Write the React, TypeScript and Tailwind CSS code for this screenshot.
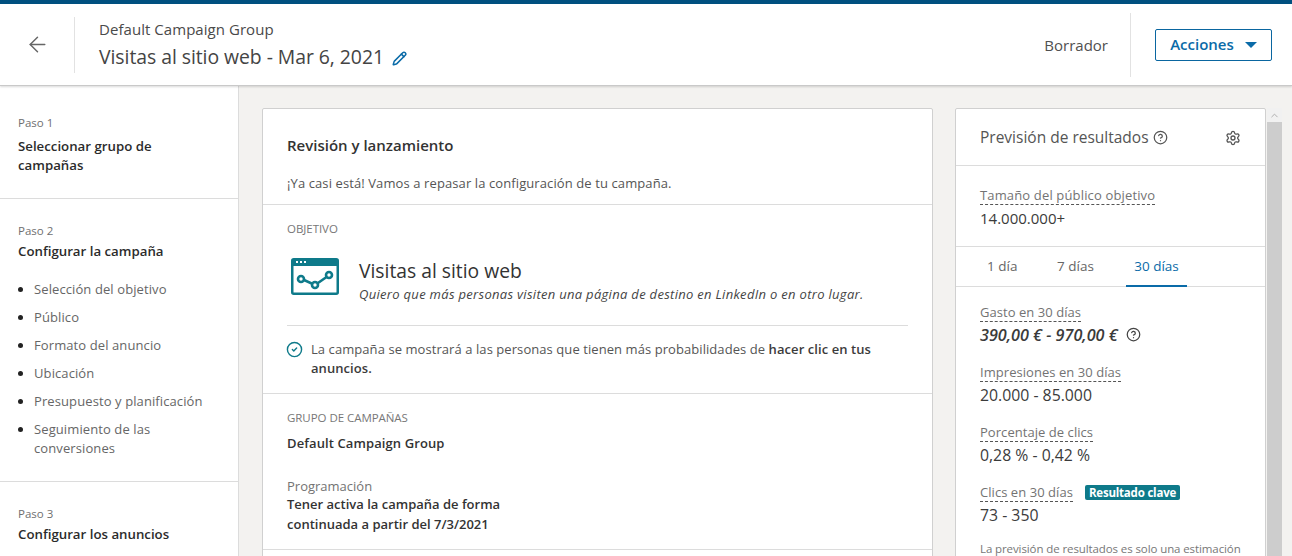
import React from 'react';
import { ArrowLeft, Settings, CircleHelp, CircleCheck, Pencil, ChevronUp } from 'lucide-react';

const font = "font-['Open_Sans',sans-serif]";

function Step({ label, title, wide }: { label: string; title: string; wide?: boolean }) {
  return (
    <>
      <div className="text-[11.5px] leading-[16px] text-[#6f6f6f]">{label}</div>
      <div className={`text-[13.25px] leading-[19px] font-semibold text-[#2b2b2b] ${wide ? 'mt-[3px]' : 'mt-[6px] w-[150px]'}`}>{title}</div>
    </>
  );
}

function Metric({ label, value, italic, children, badge }: { label: string; value: string; italic?: boolean; children?: React.ReactNode; badge?: boolean }) {
  return (
    <div className="mb-[17px]">
      <div className="flex items-center h-[19px]">
        <span className="text-[13px] leading-[18px] text-[#737373] border-b border-dashed border-[#555] tracking-[0.05px]">{label}</span>
        {badge && (
          <span className="ml-[12px] bg-[#0e7a8a] text-white text-[11.5px] font-bold leading-[15px] px-[4px] rounded-[2px] tracking-[-0.2px]">Resultado clave</span>
        )}
      </div>
      <div className={`flex items-center h-[24px] pt-[3px] text-[#3b3b3b] ${italic ? 'text-[16.2px] italic font-semibold' : 'text-[15.8px] font-medium'}`}>
        {value}
        {children}
      </div>
    </div>
  );
}

export default function App() {
  const items = ['Selección del objetivo', 'Público', 'Formato del anuncio', 'Ubicación', 'Presupuesto y planificación'];

  return (
    <div className={`${font} h-[556px] w-[1292px] overflow-hidden bg-[#f3f2f0] flex flex-col`}>
      {/* Header */}
      <header className="relative z-10 h-[86px] shrink-0 bg-white border-t-4 border-[#00507f] border-b border-b-[#c9c9c9] shadow-[0_1px_2px_rgba(0,0,0,0.15)] flex items-center">
        <div className="w-[75px] h-[56px] border-r border-[#e2e2e2] flex items-center pl-[25px]">
          <ArrowLeft size={25} strokeWidth={1.4} className="text-[#666] -mt-[1px]" />
        </div>
        <div className="pl-[24px]">
          <div className="text-[15px] leading-[20px] text-[#4a4a4a] tracking-[0.05px] -mt-[1px]">Default Campaign Group</div>
          <div className="flex items-center mt-[5px] text-[19.4px] leading-[26px] text-[#444] tracking-[-0.05px]">
            Visitas al sitio web - Mar 6, 2021
            <Pencil size={15} strokeWidth={2.4} className="text-[#0a6ba8] ml-[8px] mt-[3px]" />
          </div>
        </div>
        <div className="ml-auto flex items-center">
          <span className="text-[15px] text-[#505050] mr-[22px] mt-[2px]">Borrador</span>
          <div className="w-px h-[64px] bg-[#e2e2e2]" />
          <button className="ml-[24px] mr-[20px] w-[117px] h-[32px] border border-[#0a66a0] rounded-[2px] flex items-center justify-center text-[15px] font-semibold text-[#0a6ba8]">
            Acciones
            <span className="ml-[11px] w-0 h-0 border-l-[6px] border-r-[6px] border-t-[6px] border-l-transparent border-r-transparent border-t-[#0a6ba8]" />
          </button>
        </div>
      </header>

      <div className="flex flex-1 min-h-0">
        {/* Sidebar */}
        <aside className="w-[239px] shrink-0 bg-white border-r border-[#dcdcdc]">
          <div className="pl-[18px] pr-[20px] pt-[29px] h-[113px] border-b border-[#dcdcdc]">
            <Step label="Paso 1" title="Seleccionar grupo de campañas" />
          </div>
          <div className="pl-[18px] pr-[20px] pt-[24px] h-[283px] border-b border-[#dcdcdc]">
            <Step label="Paso 2" title="Configurar la campaña" wide />
            <ul className="mt-[19px] text-[13px] leading-[19px] text-[#666] tracking-[0.1px]">
              {items.map((item) => (
                <li key={item} className="flex items-start mb-[9px]">
                  <span className="w-[5px] h-[5px] mt-[7px] rounded-full bg-[#222] mr-[11px] shrink-0" />
                  {item}
                </li>
              ))}
              <li className="flex items-start">
                <span className="w-[5px] h-[5px] mt-[7px] rounded-full bg-[#222] mr-[11px] shrink-0" />
                <span>Seguimiento de las<br />conversiones</span>
              </li>
            </ul>
          </div>
          <div className="pl-[18px] pr-[20px] pt-[24px]">
            <Step label="Paso 3" title="Configurar los anuncios" wide />
          </div>
        </aside>

        {/* Main */}
        <main className="flex-1 flex items-start pl-[23px] pt-[22px] min-w-0">
          <section className="w-[671px] shrink-0 bg-white border border-[#d0d0d0] rounded-[2px]">
            <div className="h-[96px] px-[24px] pt-[25px] border-b border-[#dcdcdc]">
              <h2 className="text-[15px] leading-[22px] font-semibold text-[#333]">Revisión y lanzamiento</h2>
              <p className="mt-[18px] text-[13px] leading-[18px] text-[#555] tracking-[0.1px]">¡Ya casi está! Vamos a repasar la configuración de tu campaña.</p>
            </div>
            <div className="h-[189px] px-[24px] pt-[16px] border-b border-[#dcdcdc]">
              <div className="text-[11.5px] leading-[16px] text-[#777] tracking-[-0.05px]">OBJETIVO</div>
              <div className="flex items-start mt-[13px] h-[76px] border-b border-[#dcdcdc]">
                <svg width="48" height="37" viewBox="0 0 48 37" fill="none" className="shrink-0 ml-[4px] mt-[8px]">
                  <rect x="1.25" y="1.25" width="45.5" height="34.5" rx="1.5" fill="none" stroke="#0e7a8a" strokeWidth="2.5" />
                  <rect x="1" y="1" width="46" height="7" fill="#0e7a8a" />
                  <rect x="5" y="3" width="2" height="2" fill="#fff" />
                  <rect x="9" y="3" width="2" height="2" fill="#fff" />
                  <rect x="13" y="3" width="2" height="2" fill="#fff" />
                  <rect x="3" y="9" width="42" height="2" fill="#fff" />
                  <path d="M13 22 L24 27 L37 18" stroke="#0e7a8a" strokeWidth="2.5" />
                  <circle cx="10" cy="21" r="3" fill="#fff" stroke="#0e7a8a" strokeWidth="2.6" />
                  <circle cx="24" cy="27" r="3" fill="#fff" stroke="#0e7a8a" strokeWidth="2.6" />
                  <circle cx="38" cy="17" r="3" fill="#fff" stroke="#0e7a8a" strokeWidth="2.6" />
                </svg>
                <div className="ml-[20px] mt-[9px]">
                  <div className="text-[19.3px] leading-[24px] text-[#333]">Visitas al sitio web</div>
                  <div className="mt-[3px] text-[13px] leading-[16px] italic text-[#444] tracking-[0.3px]">Quiero que más personas visiten una página de destino en LinkedIn o en otro lugar.</div>
                </div>
              </div>
              <div className="flex mt-[14px]">
                <CircleCheck size={17} strokeWidth={2} className="text-[#0e7a8a] mt-[1px] -ml-[1px] shrink-0" />
                <p className="ml-[8px] text-[13px] leading-[19px] text-[#555] tracking-[0.07px]">
                  La campaña se mostrará a las personas que tienen más probabilidades de <span className="font-semibold text-[#3b3b3b]">hacer clic en tus</span><br />
                  <span className="font-semibold text-[#3b3b3b]">anuncios.</span>
                </p>
              </div>
            </div>
            <div className="h-[156px] px-[24px] pt-[16px] border-b border-[#dcdcdc]">
              <div className="text-[11.5px] leading-[16px] text-[#777] tracking-[-0.05px]">GRUPO DE CAMPAÑAS</div>
              <div className="mt-[8px] text-[13px] leading-[18px] font-semibold text-[#333] tracking-[0.1px]">Default Campaign Group</div>
              <div className="mt-[25px] text-[13px] leading-[18px] text-[#737373]">Programación</div>
              <div className="text-[13px] leading-[19.5px] font-semibold text-[#333]">Tener activa la campaña de forma<br />continuada a partir del 7/3/2021</div>
            </div>
            <div className="h-[60px]" />
          </section>

          <section className="ml-[22px] w-[311px] shrink-0 bg-white border border-[#d0d0d0] rounded-[2px] h-[600px]">
            <div className="h-[57px] px-[24px] pt-[1px] flex items-center border-b border-[#dcdcdc]">
              <span className="text-[15.5px] font-medium text-[#555]">Previsión de resultados</span>
              <CircleHelp size={15} strokeWidth={2} className="text-[#555] ml-[4px]" />
              <Settings size={16} strokeWidth={2} className="text-[#555] ml-auto" />
            </div>
            <div className="h-[81px] px-[24px] pt-[20px] border-b border-[#dcdcdc]">
              <div className="flex h-[19px]">
                <span className="text-[13px] leading-[18px] text-[#737373] border-b border-dashed border-[#555] tracking-[0.15px]">Tamaño del público objetivo</span>
              </div>
              <div className="mt-[3px] text-[15px] leading-[21px] text-[#3b3b3b] font-medium">14.000.000+</div>
            </div>
            <div className="h-[40px] flex px-[16px] border-b border-[#dcdcdc] text-[13.5px] text-[#666]">
              <div className="w-[67px] flex items-center pl-[15px]">1 día</div>
              <div className="w-[77px] flex items-center pl-[18px]">7 días</div>
              <div className="ml-[10px] w-[61px] h-[40px] flex items-center justify-center font-medium text-[#0a6ba8] border-b-2 border-[#0a6ba8] pt-[1px]">30 días</div>
            </div>
            <div className="px-[24px] pt-[16px]">
              <Metric label="Gasto en 30 días" value="390,00 € - 970,00 €" italic>
                <CircleHelp size={15} strokeWidth={2} className="text-[#444] ml-[8px] mb-[3px]" />
              </Metric>
              <Metric label="Impresiones en 30 días" value="20.000 - 85.000" />
              <Metric label="Porcentaje de clics" value="0,28 % - 0,42 %" />
              <Metric label="Clics en 30 días" value="73 - 350" badge />
              <p className="text-[11.5px] leading-[16px] text-[#777] tracking-[-0.1px] mt-[-2px] whitespace-nowrap">La previsión de resultados es solo una estimación</p>
            </div>
          </section>

          {/* Scrollbar */}
          <div className="w-[15px] ml-[1px] flex flex-col self-stretch">
            <div className="h-[14px] flex items-center justify-center bg-[#f1f1f1]">
              <ChevronUp size={11} strokeWidth={2} className="text-[#aaa]" />
            </div>
            <div className="flex-1 bg-[#cdcdcd]" />
          </div>
        </main>
      </div>
    </div>
  );
}
